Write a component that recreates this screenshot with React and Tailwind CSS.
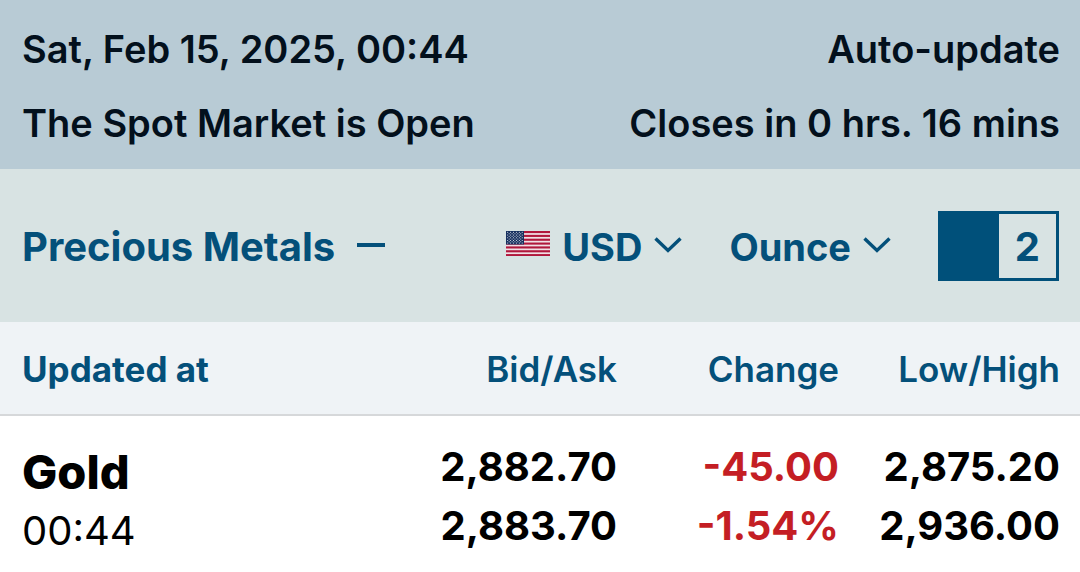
import { useState } from "react";

const metals = [
  {
    name: "Gold",
    time: "00:44",
    bid: "2,882.70",
    ask: "2,883.70",
    change: "-45.00",
    changePercent: "-1.54%",
    low: "2,875.20",
    high: "2,936.00",
  },
];

const UsFlag = () => (
  <svg viewBox="0 0 44 25" className="w-11 shrink-0 mb-2" aria-hidden="true">
    <rect width="44" height="25" fill="#f0dfe4" />
    {[0, 1, 2, 3, 4, 5, 6].map((i) => (
      <rect key={i} y={i * 3.846} width="44" height="2.1" fill="#b0173c" />
    ))}
    <rect width="18" height="13.46" fill="#16305f" />
    {[0, 1, 2, 3, 4, 5, 6, 7, 8].map((row) =>
      [0, 1, 2, 3, 4, 5].map((col) =>
        row % 2 && col === 5 ? null : (
          <circle
            key={`${row}-${col}`}
            cx={1.7 + col * 2.9 + (row % 2 ? 1.45 : 0)}
            cy={1.3 + row * 1.35}
            r="0.5"
            fill="#fff"
          />
        )
      )
    )}
  </svg>
);

const Chevron = () => (
  <svg
    viewBox="0 0 28 16"
    className="w-7 shrink-0 mb-1 pointer-events-none"
    fill="none"
    stroke="currentColor"
    strokeWidth="3.4"
    aria-hidden="true"
  >
    <path d="M1.5 1.5 14 13.5 26.5 1.5" />
  </svg>
);

const MinusIcon = () => (
  <svg
    viewBox="0 0 28 4"
    className="w-7 shrink-0 mb-1"
    fill="currentColor"
    aria-hidden="true"
  >
    <rect width="28" height="4" />
  </svg>
);

const Dropdown = ({ label, options, children }) => (
  <label className="flex items-center gap-3">
    {children}
    <select
      aria-label={label}
      className="appearance-none field-sizing-content bg-transparent text-[38px] font-bold"
    >
      {options.map((option) => (
        <option key={option}>{option}</option>
      ))}
    </select>
    <Chevron />
  </label>
);

const App = () => {
  const [decimals, setDecimals] = useState(true);
  const [open, setOpen] = useState(true);

  return (
    <div className="min-h-screen bg-white font-['Inter','Liberation_Sans',sans-serif] text-black">
      <header className="bg-[#b8cbd5] pl-[22px] pr-[20px] pt-[25px] pb-[22px] flex flex-col gap-[26px] text-[38px] leading-[48px] font-semibold text-[#03101c]">
        <div className="flex justify-between">
          <p>Sat, Feb 15, 2025, 00:44</p>
          <p>Auto-update</p>
        </div>
        <div className="flex justify-between">
          <p>The Spot Market is Open</p>
          <p>Closes in 0 hrs. 16 mins</p>
        </div>
      </header>

      <section className="bg-[#d8e3e3] pl-[22px] pr-[21px] pt-[42px] pb-[41px] flex items-center justify-between text-[40px] leading-[48px] font-bold text-[#04507a]">
        <button
          className="flex items-center gap-[22px] pt-[2px]"
          aria-expanded={open}
          onClick={() => setOpen(!open)}
        >
          Precious Metals
          <MinusIcon />
        </button>
        <div className="flex items-center gap-[47px]">
          <div className="flex items-center gap-[47px] pt-[2px]">
            <Dropdown label="Currency" options={["USD", "EUR", "GBP"]}>
              <UsFlag />
            </Dropdown>
            <Dropdown label="Unit" options={["Ounce", "Gram", "Kilo"]} />
          </div>
          <button
            role="switch"
            aria-checked={decimals}
            onClick={() => setDecimals(!decimals)}
            className="flex h-[70px] w-[121px] items-center justify-end border-3 border-[#00507a] bg-[#00507a]"
          >
            <span className="flex h-full w-1/2 items-center justify-center bg-[#d8e3e3] pt-[2px]">
              2
            </span>
          </button>
        </div>
      </section>

      {open && (
        <table className="w-full table-fixed">
          <thead className="bg-[#eff3f6] text-[35px] leading-[44px] text-[#04507a]">
            <tr className="border-b-2 border-[#d6d8da]">
              <th className="w-[36%] pl-[22px] pt-[25px] pb-[23px] text-left font-bold">
                Updated at
              </th>
              <th className="pt-[25px] pb-[23px] text-right font-semibold">
                Bid/Ask
              </th>
              <th className="w-[222px] pt-[25px] pb-[23px] text-right font-semibold">
                Change
              </th>
              <th className="w-[241px] pr-[20px] pt-[25px] pb-[23px] text-right font-semibold">
                Low/High
              </th>
            </tr>
          </thead>
          <tbody className="text-[40px] leading-[59px] font-bold">
            {metals.map((metal) => (
              <tr key={metal.name} className="align-top">
                <td className="pl-[22px] pt-[26px]">
                  <a href="#gold" className="block text-[47px] font-extrabold">
                    {metal.name}
                  </a>
                  <p className="font-normal">{metal.time}</p>
                </td>
                <td className="pt-[21px] text-right">
                  <p>{metal.bid}</p>
                  <p>{metal.ask}</p>
                </td>
                <td className="pt-[21px] text-right text-[#c41e24]">
                  <p>{metal.change}</p>
                  <p>{metal.changePercent}</p>
                </td>
                <td className="pr-[20px] pt-[21px] text-right">
                  <p>{metal.low}</p>
                  <p>{metal.high}</p>
                </td>
              </tr>
            ))}
          </tbody>
        </table>
      )}
    </div>
  );
};

export default App;
